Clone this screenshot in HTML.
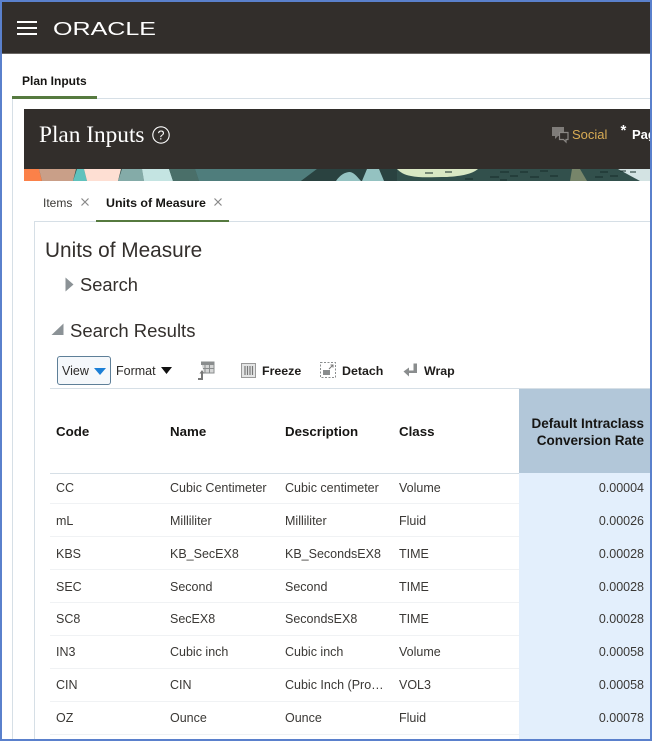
<!DOCTYPE html>
<html><head><meta charset="utf-8">
<style>
html,body{margin:0;padding:0;background:#fff}
#p{position:relative;width:652px;height:742px;overflow:hidden;background:#fff;font-family:"Liberation Sans",Arial,sans-serif;color:#333}
#p div,#p svg{position:absolute}
.t{white-space:nowrap;line-height:16px}
.h{font-weight:bold;font-size:13.3px;color:#161513;top:424px}
.c{font-size:12.5px;color:#3a3835;white-space:nowrap;line-height:16px}
.l{left:50px;width:469px;height:1px;background:#f0f2f4}
.n{left:519px;width:125px;text-align:right;font-size:12.5px;color:#3a3835;line-height:16px}
.b{font-weight:bold;font-size:12.4px;color:#1f1d1b;white-space:nowrap;line-height:16px;top:363px}
</style></head><body><div id="p">

<div style="left:0;top:0;width:652px;height:53px;background:#322e2b"></div>
<div style="left:0;top:53px;width:652px;height:1px;background:#6a6764"></div>
<div style="left:17px;top:21px;width:20px;height:2px;background:#fff"></div>
<div style="left:17px;top:27px;width:20px;height:2px;background:#fff"></div>
<div style="left:17px;top:33px;width:20px;height:2px;background:#fff"></div>
<svg style="left:50px;top:15px" width="110" height="26"><text x="3" y="20" font-family="Liberation Sans" font-size="18" fill="#fff" textLength="103" lengthAdjust="spacingAndGlyphs">ORACLE</text></svg>

<div class="t" style="left:22px;top:73px;font-size:12px;font-weight:bold;color:#161513">Plan Inputs</div>
<div style="left:12px;top:98px;width:640px;height:1px;background:#d6dfe6"></div>
<div style="left:12px;top:96px;width:85px;height:3px;background:#567a3f"></div>
<div style="left:12px;top:99px;width:1px;height:643px;background:#d6dfe6"></div>

<div style="left:24px;top:109px;width:628px;height:60px;background:#322e2b"></div>
<div class="t" style="left:39px;top:122px;font-family:'Liberation Serif',serif;font-size:23.3px;line-height:26px;color:#fff">Plan Inputs</div>
<svg style="left:151px;top:125px" width="20" height="20"><circle cx="10" cy="10" r="8.2" fill="none" stroke="#fff" stroke-width="1.1"/><text x="10" y="14.5" text-anchor="middle" font-family="Liberation Sans" font-size="12.5" fill="#fff">?</text></svg>

<svg style="left:552px;top:126px" width="19" height="18">
<path d="M0 1h12v9H6l-3 3v-3H0z" fill="#7f7c79"/>
<path d="M7.5 6.5h8.5v7h-2v2.5l-2.5-2.5h-4z" fill="#322e2b" stroke="#8a8784" stroke-width="1.2"/>
</svg>
<div class="t" style="left:572px;top:127px;font-size:13px;color:#d9ac54">Social</div>
<div class="t" style="left:620.5px;top:123px;font-size:15px;font-weight:bold;color:#fff">*</div>
<div class="t" style="left:632px;top:127px;font-size:13px;font-weight:bold;color:#fff">Pag</div>

<svg style="left:24px;top:169px" width="628" height="12" viewBox="24 169 628 12" preserveAspectRatio="none">
<rect x="24" y="169" width="628" height="12" fill="#32504c"/>
<path d="M24 169H39L42 181H24z" fill="#fb8149"/>
<path d="M39 169H76L73 181H42z" fill="#c99f88"/>
<path d="M77 169H84L87 181H73z" fill="#5fc2bd"/>
<path d="M84 169H121L118 181H87z" fill="#fedfd3"/>
<path d="M122 169H142L144 181H118z" fill="#84aba8"/>
<path d="M142 169H169L173 181H144z" fill="#c4e4e2"/>
<path d="M169 169H195L199 181H173z" fill="#4a6f69"/>
<path d="M195 169H317L301 181H199z" fill="#4f7d7c"/>
<path d="M317 169H397V181H301z" fill="#2a4240"/>
<path d="M336 181C340 175 345 172 350 172C355 173 358 178 361 181z" fill="#94c2c1"/>
<path d="M367 169H379L384 181H362z" fill="#94c2c1"/>
<path d="M397 169H478C472 174 462 176 447 177C432 177 420 178 411 176C404 175 400 172 397 169z" fill="#d9e8c4"/>
<path d="M572 169H580L587 181H570z" fill="#77856a"/>
<path d="M618 169H650V181H640z" fill="#d3e3e3"/>
<path d="M425 173h8M445 172h7M500 172h9M520 172h8M540 171h8M600 172h8M490 177h9M510 176h8M530 177h9M550 176h8M595 177h8M610 176h8M620 171h6M630 172h6M465 179h8M500 180h7" stroke="#162c2a" stroke-width="1" fill="none"/>
</svg>

<div class="t" style="left:43px;top:195px;font-size:12px;color:#3a3835">Items</div>
<svg style="left:81px;top:198px" width="8" height="8"><path d="M0.5 0.5L7.5 7.5M7.5 0.5L0.5 7.500" stroke="#888" stroke-width="1.2"/></svg>
<div class="t" style="left:106px;top:195px;font-size:12.4px;font-weight:bold;color:#161513">Units of Measure</div>
<svg style="left:214px;top:198px" width="8" height="8"><path d="M0.5 0.5L7.5 7.5M7.5 0.5L0.5 7.500" stroke="#888" stroke-width="1.2"/></svg>
<div style="left:34px;top:221px;width:618px;height:1px;background:#d6dfe6"></div>
<div style="left:96px;top:220px;width:133px;height:2px;background:#567a3f"></div>
<div style="left:34px;top:222px;width:1px;height:520px;background:#d6dfe6"></div>

<div class="t" style="left:45px;top:239px;font-size:20.8px;line-height:24px;color:#332f2c">Units of Measure</div>
<svg style="left:65px;top:277px" width="9" height="16"><path d="M0.5 0.5L8.5 7.5L0.5 14.5z" fill="#8b9296"/></svg>
<div class="t" style="left:80px;top:274px;font-size:18.3px;line-height:22px;color:#332f2c">Search</div>
<svg style="left:51px;top:323px" width="13" height="13"><path d="M12.5 0.5V12H0.5z" fill="#8b9296"/></svg>
<div class="t" style="left:70px;top:320px;font-size:18.5px;line-height:22px;color:#332f2c">Search Results</div>

<div style="left:57px;top:356px;width:52px;height:27px;border:1px solid #5e7f98;border-radius:3px;background:#f5f8fb"></div>
<div class="t" style="left:62px;top:363px;font-size:12.5px;color:#2c2a28">View</div>
<svg style="left:94px;top:368px" width="12" height="7"><path d="M0 0H12L6 7z" fill="#1c7fd6"/></svg>
<div class="t" style="left:116px;top:363px;font-size:12.5px;color:#2c2a28">Format</div>
<svg style="left:161px;top:367px" width="11" height="7"><path d="M0 0H11L5.5 7z" fill="#111"/></svg>

<svg style="left:197px;top:361px" width="18" height="20">
<path d="M4 1h13v11H7" fill="#d5d6d6" stroke="#8a8d8e"/>
<path d="M4 1h13v3H4z" fill="#8a8d8e"/>
<path d="M8 4v8M12.500 4v8M6 7.500h11" stroke="#8a8d8e" fill="none"/>
<path d="M1 18h4v-6" fill="none" stroke="#777" stroke-width="2"/>
<path d="M2.500 12.500L5 9l2.500 3.500z" fill="#777"/>
</svg>

<svg style="left:241px;top:363px" width="15" height="15">
<rect x="0.500" y="0.500" width="14" height="14" fill="#e4e5e5" stroke="#999"/>
<path d="M4 3v9M6.500 3v9M9 3v9M11.500 3v9" stroke="#777" stroke-width="1.200"/>
</svg>
<div class="b" style="left:262px">Freeze</div>

<svg style="left:320px;top:362px" width="16" height="16">
<rect x="0.500" y="0.500" width="15" height="15" fill="none" stroke="#8a8d8e" stroke-dasharray="2 1.500"/>
<rect x="3" y="8" width="7" height="5" fill="#8a8d8e"/>
<path d="M9 7l4-4M10.500 3H13v2.500" stroke="#777" fill="none"/>
</svg>
<div class="b" style="left:342px">Detach</div>

<svg style="left:403px;top:363px" width="15" height="15">
<path d="M10.500 0.500H14V10H6V13.500L0.500 8.500L6 4.500V7.500H10.500z" fill="#8a8d8e"/>
</svg>
<div class="b" style="left:424px">Wrap</div>

<div style="left:50px;top:388px;width:600px;height:1px;background:#d6dfe6"></div>
<div style="left:519px;top:389px;width:131px;height:84px;background:#b2c7d9"></div>
<div style="left:519px;top:473px;width:131px;height:269px;background:#e3effc"></div>
<div style="left:50px;top:473px;width:469px;height:1px;background:#d6dfe6"></div>

<div class="t h" style="left:56px">Code</div>
<div class="t h" style="left:170px">Name</div>
<div class="t h" style="left:285px">Description</div>
<div class="t h" style="left:399px">Class</div>
<div class="h" style="left:519px;width:125px;top:415px;text-align:right;font-size:13.5px;line-height:17px;white-space:nowrap">Default Intraclass<br>Conversion Rate</div>

<div class="c" style="left:56px;top:480px">CC</div><div class="c" style="left:170px;top:480px">Cubic Centimeter</div><div class="c" style="left:285px;top:480px">Cubic centimeter</div><div class="c" style="left:399px;top:480px">Volume</div><div class="n" style="top:480px">0.00004</div>
<div class="l" style="top:503px"></div>
<div class="c" style="left:56px;top:513px">mL</div><div class="c" style="left:170px;top:513px">Milliliter</div><div class="c" style="left:285px;top:513px">Milliliter</div><div class="c" style="left:399px;top:513px">Fluid</div><div class="n" style="top:513px">0.00026</div>
<div class="l" style="top:536px"></div>
<div class="c" style="left:56px;top:546px">KBS</div><div class="c" style="left:170px;top:546px">KB_SecEX8</div><div class="c" style="left:285px;top:546px">KB_SecondsEX8</div><div class="c" style="left:399px;top:546px">TIME</div><div class="n" style="top:546px">0.00028</div>
<div class="l" style="top:569px"></div>
<div class="c" style="left:56px;top:579px">SEC</div><div class="c" style="left:170px;top:579px">Second</div><div class="c" style="left:285px;top:579px">Second</div><div class="c" style="left:399px;top:579px">TIME</div><div class="n" style="top:579px">0.00028</div>
<div class="l" style="top:602px"></div>
<div class="c" style="left:56px;top:611px">SC8</div><div class="c" style="left:170px;top:611px">SecEX8</div><div class="c" style="left:285px;top:611px">SecondsEX8</div><div class="c" style="left:399px;top:611px">TIME</div><div class="n" style="top:611px">0.00028</div>
<div class="l" style="top:635px"></div>
<div class="c" style="left:56px;top:644px">IN3</div><div class="c" style="left:170px;top:644px">Cubic inch</div><div class="c" style="left:285px;top:644px">Cubic inch</div><div class="c" style="left:399px;top:644px">Volume</div><div class="n" style="top:644px">0.00058</div>
<div class="l" style="top:668px"></div>
<div class="c" style="left:56px;top:677px">CIN</div><div class="c" style="left:170px;top:677px">CIN</div><div class="c" style="left:285px;top:677px">Cubic Inch (Pro…</div><div class="c" style="left:399px;top:677px">VOL3</div><div class="n" style="top:677px">0.00058</div>
<div class="l" style="top:701px"></div>
<div class="c" style="left:56px;top:710px">OZ</div><div class="c" style="left:170px;top:710px">Ounce</div><div class="c" style="left:285px;top:710px">Ounce</div><div class="c" style="left:399px;top:710px">Fluid</div><div class="n" style="top:710px">0.00078</div>
<div class="l" style="top:734px"></div>

<div style="left:0;top:0;width:652px;height:2px;background:#5a80cc"></div>
<div style="left:0;top:0;width:2px;height:742px;background:#5a80cc"></div>
<div style="left:650px;top:0;width:2px;height:742px;background:#5a80cc"></div>
<div style="left:0;top:739px;width:652px;height:2px;background:#5a80cc"></div>
<div style="left:0;top:741px;width:652px;height:1px;background:#fff"></div>
</div></body></html>
